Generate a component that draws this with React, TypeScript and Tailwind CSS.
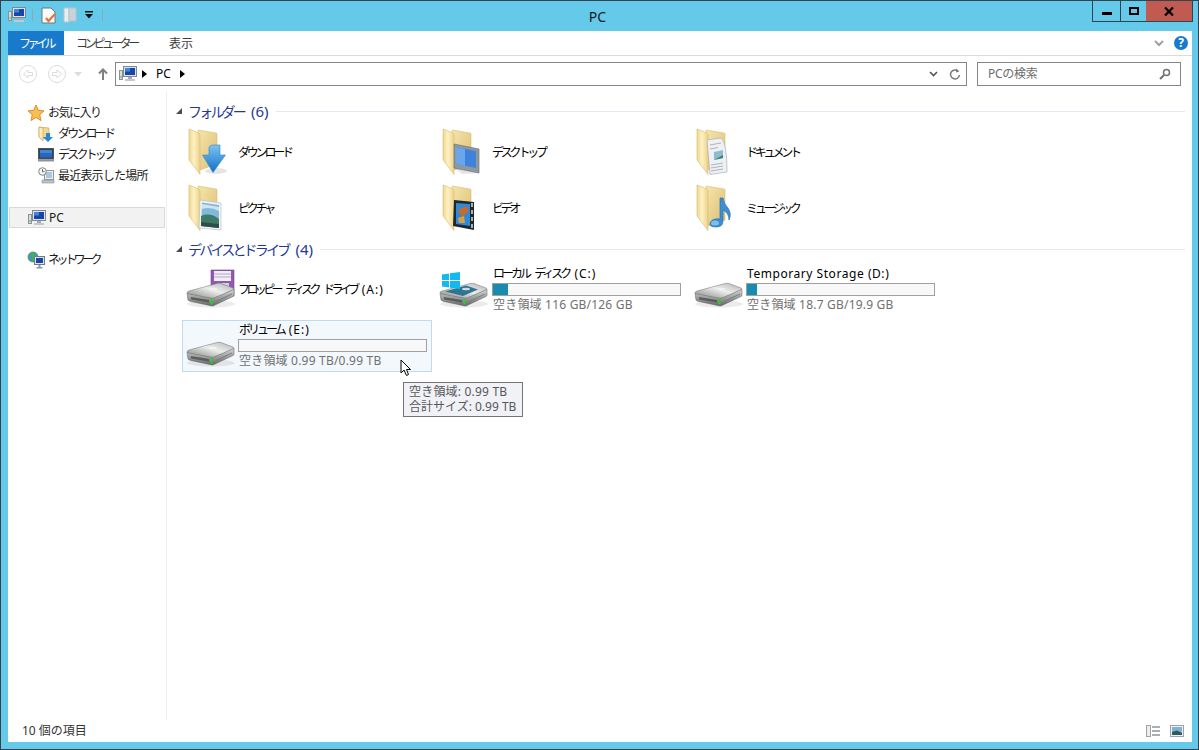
import React from "react";

const FONT = "[font-family:'Noto_Sans','Noto_Sans_CJK_JP',sans-serif]";

const PcIcon = ({ className = "" }: { className?: string }) => (
  <svg width="18" height="16" viewBox="0 0 18 16" className={className}>
    <rect x="0.5" y="4.5" width="3" height="9" fill="#d8dde0" stroke="#8a9298" />
    <rect x="1.5" y="10" width="1" height="2" fill="#45c040" />
    <rect x="4.5" y="0.5" width="13" height="10" fill="#dfe3e6" stroke="#7f8a92" />
    <rect x="6" y="2" width="10" height="7" fill="#1746a8" />
    <rect x="6" y="2" width="5" height="3.5" fill="#3f86e0" />
    <rect x="9" y="11" width="4" height="2" fill="#a6adb2" />
    <rect x="6" y="13" width="10" height="2" fill="#c4c9cc" />
  </svg>
);

const FolderIcon = ({ children }: { children?: React.ReactNode }) => (
  <svg width="48" height="48" viewBox="0 0 48 48" className="shrink-0">
    <defs>
      <linearGradient id="folderBack" x1="0" y1="0" x2="1" y2="1">
        <stop offset="0" stopColor="#f6e6ac" />
        <stop offset="1" stopColor="#dcbd72" />
      </linearGradient>
      <linearGradient id="folderLeaf" x1="0" y1="0" x2="1" y2="0">
        <stop offset="0" stopColor="#f0d68a" />
        <stop offset="0.45" stopColor="#fdf2c4" />
        <stop offset="1" stopColor="#ecd288" />
      </linearGradient>
    </defs>
    <path d="M10 3 L28 6 Q29 6 29 7 L29 37 L12 43 Z" fill="url(#folderBack)" stroke="#d9bc78" strokeWidth="0.6" />
    <path d="M1 2 L11 6 Q12 6.500 12 8 L12 47.500 L1.800 34 Q1 33 1 32 Z" fill="url(#folderLeaf)" stroke="#d8bb76" strokeWidth="0.6" />
    {children}
  </svg>
);

const DownloadArrow = () => (
  <>
    <defs>
      <linearGradient id="arrowBlue" x1="0" y1="0" x2="0" y2="1">
        <stop offset="0" stopColor="#7cc4f0" />
        <stop offset="1" stopColor="#1070c8" />
      </linearGradient>
    </defs>
    <ellipse cx="28" cy="44" rx="11" ry="3" fill="#000" opacity="0.1" />
    <path d="M21 20 Q22 18 25 18 L32 18 L32 28 L37.500 28 L25 45.500 L14.500 28 L21 28 Z" fill="url(#arrowBlue)" stroke="#2d86cc" strokeWidth="0.6" />
  </>
);

const DesktopOverlay = () => (
  <>
    <path d="M12 41 L37 46 L41 46 L20 47 Z" fill="#000" opacity="0.1" />
    <path d="M12 17 L37 22 L37 46 L12 41 Z" fill="#8f989d" stroke="#6e777c" strokeWidth="0.7" />
    <path d="M14 20 L34 24 L34 41 L14 37 Z" fill="#3f82dc" />
    <path d="M14 20 L23 22 L23 39 L14 37 Z" fill="#6aa6ec" />
  </>
);

const DocsOverlay = () => (
  <>
    <path d="M11 13 L25 11 Q31 15 31 45 L14 47.500 Z" fill="#eef0f4" stroke="#aab0b8" strokeWidth="0.7" />
    <path d="M14 18 L25 16 M14 22 L22 20.500 M15 38 L27 36 M15 41 L27 39 M15 44 L27 42" stroke="#b0b6bd" strokeWidth="1.2" />
    <path d="M18 25 L27 23 L27 31 L18 33 Z" fill="#8dbccf" />
    <path d="M20 32 L27 28 L27 31 L18 33 Z" fill="#3c7f6a" />
  </>
);

const PictureOverlay = () => (
  <>
    <path d="M12 17 L33 20 L33 47 L11 45 Z" fill="#f2f3f4" stroke="#b5b9bc" strokeWidth="0.6" />
    <path d="M14 19.500 L31 22 L31 45 L13 43 Z" fill="#7fb9dc" />
    <path d="M14 21 L31 24 L31 28 Q22 23 14 26 Z" fill="#cfe4ef" />
    <path d="M13 33 Q22 29 31 36 L31 45 L13 43 Z" fill="#3f7a68" />
    <path d="M13 39 L31 41 L31 45 L13 43 Z" fill="#2c4e4a" />
  </>
);

const VideoOverlay = () => (
  <>
    <path d="M12 17 L32 19 L32 47 L11 43 Z" fill="#20262b" />
    <path d="M14 20 L28 21 L28 43 L14 41 Z" fill="#2f8bd6" />
    <path d="M16 27 L24 23 L27 28 L20 34 Z" fill="#c96a28" />
    <path d="M16 35 L22 33 L23 40 L17 40 Z" fill="#d8a040" />
    <path d="M30 20 V24 M30 27 V31 M30 34 V38 M30 41 V45" stroke="#e8e8e8" strokeWidth="1.4" />
  </>
);

const MusicOverlay = () => (
  <>
    <path d="M24 15 L27 15 Q28 21 32 25 Q36 31 33 37 Q33 30 27 27 L27 38 Q27 44 20 44 Q13 44 14 40 Q16 35 24 36 Z" fill="#3c8fd4" stroke="#2a70b0" strokeWidth="0.7" />
    <ellipse cx="19" cy="40" rx="4" ry="2.500" fill="#7ec0ee" />
  </>
);

const DriveBody = ({ panel = false }: { panel?: boolean }) => (
  <>
    <defs>
      <linearGradient id="hddTop" x1="0" y1="1" x2="1" y2="0">
        <stop offset="0" stopColor="#80847f" />
        <stop offset="0.55" stopColor="#eceeec" />
        <stop offset="1" stopColor="#b0b4b2" />
      </linearGradient>
      <linearGradient id="hddFront" x1="0" y1="0" x2="0" y2="1">
        <stop offset="0" stopColor="#d8dad8" />
        <stop offset="1" stopColor="#646766" />
      </linearGradient>
    </defs>
    <ellipse cx="26" cy="41" rx="24" ry="3.500" fill="#000" opacity="0.08" />
    <path d="M2 30 L3 37 Q4 38 6 38.500 L27 43 Q28.500 43 30 42 L48 33.500 Q49 33 49 32 L49 26 L28 35 Z" fill="url(#hddFront)" stroke="#5c5f5e" strokeWidth="0.5" />
    <path d="M2 30 Q2 28.500 4 28 L32 20.500 Q34 20 36 20.500 L48 25 Q49.500 26 48 26.800 L30 34.500 Q28 35.500 26 35 L4 31 Q2.500 31 2 30 Z" fill="url(#hddTop)" stroke="#6d706f" strokeWidth="0.5" />
    {panel ? <path d="M7 28.500 L28 22.500 L40 26.500 L25 33 Z" fill="#2f7490" /> : null}
    <ellipse cx="28" cy="26" rx="4" ry="1.300" fill="#f4f4f4" opacity="0.8" />
    <path d="M6 34 L24 37 L24 39.500 L6 36.500 Z" fill="#4c504f" opacity="0.8" />
    <rect x="25.500" y="36.500" width="2" height="5" fill="#22d422" />
    <path d="M31 38.500 L47 31" stroke="#7b7e7d" strokeWidth="1" />
  </>
);

const HddIcon = ({ lift = 0 }: { lift?: number }) => (
  <svg width="52" height="48" viewBox="0 0 52 48" className="shrink-0">
    <g transform={`translate(0,${lift})`}>
      <DriveBody />
    </g>
  </svg>
);

const FloppyIcon = () => (
  <svg width="52" height="48" viewBox="0 0 52 48" className="shrink-0">
    <path d="M26 4 L49 4 L49 30 L26 30 Z" fill="#8e5bb0" stroke="#6e4290" strokeWidth="0.6" />
    <rect x="29" y="5" width="17" height="10" fill="#f2eef6" />
    <path d="M29 8 H46 M29 11 H46" stroke="#b9a6cb" strokeWidth="1" />
    <rect x="32" y="17" width="12" height="12" fill="#d6cfe0" />
    <rect x="35" y="19" width="3" height="7" fill="#7a4f9c" />
    <g transform="translate(0,-3)">
      <DriveBody />
    </g>
  </svg>
);

const WindowsDriveIcon = () => (
  <svg width="52" height="48" viewBox="0 0 52 48" className="shrink-0">
    <g transform="translate(-1,-3)">
      <DriveBody panel />
    </g>
    <g transform="translate(-3,2)">
      <path d="M6 6.500 L13 5.500 L13 12 L6 12 Z M14 5.300 L24 4 L24 12 L14 12 Z M6 13 L13 13 L13 19.500 L6 18.500 Z M14 13 L24 13 L24 21 L14 19.700 Z" fill="#13b8ee" />
    </g>
  </svg>
);

const StarIcon = () => (
  <svg width="18" height="18" viewBox="0 0 18 18">
    <path d="M9 1 L11.300 6.300 L17 6.900 L12.700 10.700 L14 16.500 L9 13.500 L4 16.500 L5.300 10.700 L1 6.900 L6.700 6.300 Z" fill="#f8c050" stroke="#e08a30" strokeWidth="1" />
  </svg>
);

const SmallDownloadIcon = () => (
  <svg width="16" height="16" viewBox="0 0 16 16">
    <path d="M1 1 L11 2 L11 12 L3 13 L1 11 Z" fill="#f0d88e" stroke="#caa860" strokeWidth="0.7" />
    <path d="M1 1 L5 2 L5 15 L1 11 Z" fill="#fbeebb" stroke="#caa860" strokeWidth="0.7" />
    <path d="M8 7 H12 V11 H15 L10 16 L5 11 H8 Z" fill="#2a88d8" />
  </svg>
);

const SmallDesktopIcon = () => (
  <svg width="17" height="14" viewBox="0 0 17 14">
    <rect x="0.500" y="0.500" width="15" height="10.500" fill="#36424c" stroke="#4a555e" />
    <rect x="2" y="2" width="12" height="7.500" fill="#2a66c0" />
    <rect x="2" y="2" width="12" height="3" fill="#3f86d8" />
    <rect x="0" y="11.500" width="16" height="2" fill="#8b959c" />
  </svg>
);

const RecentIcon = () => (
  <svg width="17" height="17" viewBox="0 0 17 17">
    <rect x="6.500" y="3.500" width="9" height="9" fill="#eef1f3" stroke="#8e979d" />
    <path d="M8 6 H14 M8 8 H14 M8 10 H14" stroke="#6d9ebc" strokeWidth="1" />
    <circle cx="4.500" cy="4.500" r="3.800" fill="#f4f5f5" stroke="#7d868b" />
    <path d="M4.500 2.200 V4.700 H6.500" stroke="#444" strokeWidth="0.8" fill="none" />
    <rect x="4" y="13" width="12" height="3" fill="#bcc2c6" stroke="#8e979d" strokeWidth="0.6" />
  </svg>
);

const NetworkIcon = () => (
  <svg width="18" height="18" viewBox="0 0 18 18">
    <circle cx="6" cy="6" r="5" fill="#4fb04f" stroke="#2d7c8c" strokeWidth="0.7" />
    <path d="M2 4 Q5 3 5 6 Q7 8 4 10 Z M7 1.500 Q10 3 10 5 L7 4 Z" fill="#3d8fd8" />
    <rect x="7.500" y="5.500" width="10" height="8" fill="#dfe3e6" stroke="#6f7a82" />
    <rect x="9" y="7" width="7" height="5" fill="#1746a8" />
    <rect x="11.500" y="14" width="2" height="2" fill="#8f989e" />
    <rect x="9.500" y="16" width="6" height="1.500" fill="#8f989e" />
  </svg>
);

const CircleNav = ({ back = false }: { back?: boolean }) => (
  <svg width="18" height="18" viewBox="0 0 18 18" fill="none" stroke="#dcdcdc">
    <circle cx="9" cy="9" r="8.500" />
    <path d={back ? "M13.500 7.500 H9 V5 L4.500 9 L9 13 V10.500 H13.500 Z" : "M4.500 7.500 H9 V5 L13.500 9 L9 13 V10.500 H4.500 Z"} />
  </svg>
);

const NavRow = ({ icon, label, selected = false, indent = false, spacing = "" }: { icon: React.ReactNode; label: string; indent?: boolean; selected?: boolean; spacing?: string }) => (
  <div className={`h-[21px] flex items-center text-[12px] text-[#1a1a1a] ${indent ? "pl-[29px]" : "pl-[19px]"} ${selected ? "bg-[#f2f2f2] border border-[#d9d9d9] ml-px mr-px !pl-[18px]" : ""}`}>
    <span className="flex items-center justify-center shrink-0 w-[18px] mr-[3px]">{icon}</span>
    <span className={`whitespace-nowrap ${spacing}`}>{label}</span>
  </div>
);

const GroupHeader = ({ kana, count }: { kana: string; count: string }) => (
  <div className="h-5 flex items-center pr-[7px]">
    <svg width="8" height="8" viewBox="0 0 8 8" className="ml-[8px] mr-[5px]">
      <path d="M7 1 V7 H1 Z" fill="#4d4d4d" />
    </svg>
    <span className="text-[14px] text-[#1e3a96] whitespace-nowrap tracking-[-2.800px]">{kana}</span>
    <span className="text-[15px] text-[#1e3a96] whitespace-nowrap ml-[7px]">{count}</span>
    <span className="flex-1 h-px bg-[#e2e9f0] ml-[7px]" />
  </div>
);

const FolderTile = ({ overlay, label }: { overlay: React.ReactNode; label: string }) => (
  <div className="h-[52px] w-[250px] flex items-center pl-[6px] pt-[2px]">
    <FolderIcon>{overlay}</FolderIcon>
    <span className="ml-[2px] pt-[4px] text-[12px] text-black whitespace-nowrap tracking-[-3.200px]">{label}</span>
  </div>
);

const Kana = ({ children, tight = false }: { children: React.ReactNode; tight?: boolean }) => (
  <span className={`mr-[2px] ${tight ? "tracking-[-3.600px]" : "tracking-[-3px]"}`}>{children}</span>
);

const Drive = ({ children }: { children: React.ReactNode }) => <span className="tracking-[1px]">{children}</span>;

const DriveTile = ({ icon, name, free, used, selected = false }: { icon: React.ReactNode; name: React.ReactNode; free?: string; used?: number; selected?: boolean }) => (
  <div className={`h-[52px] w-[250px] flex items-center pl-[2px] border ${selected ? "bg-[#f3f8fd] border-[#bcdcf4]" : "border-transparent"}`}>
    {icon}
    <div className={`ml-[1px] flex flex-col text-[12px] leading-[14px] ${free ? "mb-[2px]" : ""}`}>
      <span className={`whitespace-nowrap text-black ${free ? "pl-px" : ""}`}>{name}</span>
      {free ? (
        <>
          <div className="w-[189px] h-[13px] mt-[2px] border border-[#a0a0a0] bg-[#f8f8f8]">
            {used ? <div className="h-full bg-[#178bb0]" style={{ width: used }} /> : null}
          </div>
          <span className="pl-px mt-[2px] whitespace-nowrap text-[#707070] tracking-[0.200px]">{free}</span>
        </>
      ) : null}
    </div>
  </div>
);

export default function App() {
  return (
    <div className={`w-[1199px] h-[750px] relative flex flex-col overflow-hidden bg-[#65c9ea] border border-[#33434d] ${FONT}`}>
      {/* title bar */}
      <div className="h-[30px] shrink-0 flex items-start relative pl-[7px]">
        <div className="flex items-center h-[28px] gap-[6px]">
          <PcIcon />
          <span className="w-px h-[12px] bg-[#8fa9b3]" />
          <svg width="15" height="17" viewBox="0 0 15 17" className="ml-[2px]">
            <path d="M1 1 H10 L14 5 V16 H1 Z" fill="#fafafa" stroke="#6d777c" />
            <path d="M5 11 L7.500 14 L14 7" stroke="#e8733a" strokeWidth="2.200" fill="none" />
          </svg>
          <svg width="14" height="16" viewBox="0 0 14 16" className="ml-[1px]">
            <rect x="1" y="1" width="5" height="14" fill="#e9edf0" stroke="#b8c3c9" />
            <rect x="6" y="1" width="7" height="13" fill="#c6d3da" stroke="#b8c3c9" />
          </svg>
          <svg width="8" height="8" viewBox="0 0 8 8" className="ml-[2px]">
            <rect x="0" y="0" width="8" height="1.500" fill="#111" />
            <path d="M0 3 H8 L4 7.500 Z" fill="#111" />
          </svg>
          <span className="w-px h-[12px] bg-[#8fa9b3] ml-[3px]" />
        </div>
        <div className="flex-1 text-center text-[14px] leading-[32px] text-[#1a1a1a]">PC</div>
        <div className="flex h-[21px] border border-t-0 border-[#2e4450] mr-[5px]">
          <div className="w-[28px] flex items-center justify-center border-r border-[#2e4450]">
            <span className="w-[10px] h-[3px] bg-black mt-[5px]" />
          </div>
          <div className="w-[25px] flex items-center justify-center">
            <span className="w-[10px] h-[8px] border-2 border-black" />
          </div>
          <div className="w-[46px] flex items-center justify-center bg-[#c15b52]">
            <svg width="10" height="9" viewBox="0 0 10 9">
              <path d="M1 0.500 L9 8.500 M9 0.500 L1 8.500" stroke="#000" strokeWidth="2.200" />
            </svg>
          </div>
        </div>
      </div>

      {/* client area */}
      <div className="flex-1 min-h-0 ml-[7px] mr-[6px] mb-[7px] bg-white flex flex-col">
        {/* ribbon tabs */}
        <div className="h-[25px] shrink-0 flex items-stretch border-b border-[#dadbdc] text-[12px] pr-[3px]">
          <div className="w-[56px] h-[24px] bg-[#1979ca] text-white flex items-center justify-center pt-px tracking-[-3.500px]">ファイル</div>
          <span className="ml-[12px] pt-px flex items-center text-[#3c3c3c] tracking-[-3.300px] w-[93px] whitespace-nowrap">コンピューター</span>
          <span className="pt-px flex items-center text-[#3c3c3c]">表示</span>
          <div className="flex-1" />
          <div className="flex items-center gap-[10px] pr-[1px]">
            <svg width="10" height="7" viewBox="0 0 10 7" fill="none" stroke="#a0a0a0" strokeWidth="2">
              <path d="M1 1 L5 5 L9 1" />
            </svg>
            <span className="w-[14px] h-[14px] rounded-full bg-[#1979ca] text-white text-[12px] font-bold leading-[14px] text-center">?</span>
          </div>
        </div>

        {/* address row */}
        <div className="h-[36px] shrink-0 flex items-start pt-[6px] pl-[11px]">
          <div className="flex items-center h-[24px]">
            <CircleNav back />
            <span className="w-[11px]" />
            <CircleNav />
            <svg width="8" height="5" viewBox="0 0 8 5" className="ml-[8px]">
              <path d="M0 0 H8 L4 4.500 Z" fill="#dcdcdc" />
            </svg>
            <svg width="10" height="12" viewBox="0 0 10 12" className="ml-[16px]" fill="none" stroke="#7f7f7f" strokeWidth="2">
              <path d="M5 12 V2 M1 5.500 L5 1.500 L9 5.500" />
            </svg>
          </div>
          <div className="ml-[7px] w-[852px] h-[24px] border border-[#868686] flex items-center pl-[3px] pr-[5px] text-[12px] text-black">
            <PcIcon />
            <svg width="5" height="8" viewBox="0 0 5 8" className="ml-[5px]">
              <path d="M0 0 L5 4 L0 8 Z" fill="#000" />
            </svg>
            <span className="ml-[9px]">PC</span>
            <svg width="5" height="8" viewBox="0 0 5 8" className="ml-[9px]">
              <path d="M0 0 L5 4 L0 8 Z" fill="#000" />
            </svg>
            <div className="flex-1" />
            <svg width="9" height="6" viewBox="0 0 9 6" fill="none" stroke="#555" strokeWidth="1.600">
              <path d="M1 1 L4.500 4.500 L8 1" />
            </svg>
            <svg width="12" height="12" viewBox="0 0 12 12" className="ml-[11px]" fill="none" stroke="#7a7a7a" strokeWidth="1.500">
              <path d="M9.500 3.500 A4.500 4.500 0 1 0 10.500 7" />
              <path d="M7 0.500 L10 3.500 L7 4.500" fill="#7a7a7a" stroke="none" />
            </svg>
          </div>
          <div className="ml-[10px] w-[204px] h-[24px] border border-[#868686] flex items-center pl-[10px] pr-[9px] text-[12px] text-[#6d6d6d]">
            <span className="flex-1 tracking-[-0.300px]">PCの検索</span>
            <svg width="12" height="12" viewBox="0 0 12 12" fill="none" stroke="#707070">
              <circle cx="7.500" cy="4.500" r="3" strokeWidth="1.500" />
              <path d="M5 7 L1 11" strokeWidth="2" />
            </svg>
          </div>
        </div>

        {/* body */}
        <div className="flex-1 min-h-0 flex">
          <nav className="w-[159px] shrink-0 h-[628px] border-r border-[#eeeeee] pt-[10px] flex flex-col">
            <NavRow icon={<StarIcon />} label="お気に入り" spacing="tracking-[-1.500px]" />
            <NavRow indent icon={<SmallDownloadIcon />} label="ダウンロード" spacing="tracking-[-2.800px]" />
            <NavRow indent icon={<SmallDesktopIcon />} label="デスクトップ" spacing="tracking-[-2.800px]" />
            <NavRow indent icon={<RecentIcon />} label="最近表示した場所" spacing="tracking-[-0.800px]" />
            <div className="h-[21px]" />
            <NavRow selected icon={<PcIcon />} label="PC" />
            <div className="h-[21px]" />
            <NavRow icon={<NetworkIcon />} label="ネットワーク" spacing="tracking-[-3.500px]" />
          </nav>

          <main className="flex-1 min-w-0 pt-[9px] flex flex-col">
            <GroupHeader kana="フォルダー" count="(6)" />
            <div className="mt-[3px] pl-[15px] grid grid-cols-[254px_254px_254px] gap-y-[4px]">
              <FolderTile overlay={<DownloadArrow />} label="ダウンロード" />
              <FolderTile overlay={<DesktopOverlay />} label="デスクトップ" />
              <FolderTile overlay={<DocsOverlay />} label="ドキュメント" />
              <FolderTile overlay={<PictureOverlay />} label="ピクチャ" />
              <FolderTile overlay={<VideoOverlay />} label="ビデオ" />
              <FolderTile overlay={<MusicOverlay />} label="ミュージック" />
            </div>
            <div className="mt-[7px]">
              <GroupHeader kana="デバイスとドライブ" count="(4)" />
            </div>
            <div className="mt-[5px] pl-[15px] grid grid-cols-[254px_254px_254px] gap-y-[4px]">
              <DriveTile icon={<FloppyIcon />} name={<><Kana tight>フロッピー</Kana> <Kana tight>ディスク</Kana> <Kana tight>ドライブ</Kana> <Drive>(A:)</Drive></>} />
              <DriveTile icon={<WindowsDriveIcon />} name={<><Kana>ローカル</Kana> <Kana>ディスク</Kana> <Drive>(C:)</Drive></>} free="空き領域 116 GB/126 GB" used={15} />
              <DriveTile icon={<HddIcon lift={-3} />} name={<span className="tracking-[0.550px]">Temporary Storage (D:)</span>} free="空き領域 18.7 GB/19.9 GB" used={10} />
              <DriveTile selected icon={<HddIcon />} name={<><Kana>ボリューム</Kana> <Drive>(E:)</Drive></>} free="空き領域 0.99 TB/0.99 TB" />
            </div>
          </main>
        </div>

        {/* status bar */}
        <div className="h-[22px] shrink-0 flex items-center pl-[14px] pr-[8px] text-[12px] text-[#333333]">
          <span className="flex-1">10 個の項目</span>
          <svg width="15" height="12" viewBox="0 0 15 12" fill="none" className="mr-[9px]">
            <rect x="0.500" y="0.500" width="4" height="11" fill="#f3efe8" stroke="#9aa3aa" />
            <path d="M6 2 H14 M6 6 H14 M6 10 H14" stroke="#56606a" strokeWidth="1.200" />
          </svg>
          <svg width="14" height="12" viewBox="0 0 14 12">
            <rect x="0.500" y="0.500" width="13" height="11" fill="#eef2f6" stroke="#9aa3b2" />
            <rect x="2" y="2" width="10" height="8" fill="#7fb2d4" />
            <path d="M2 7 L7 5.500 L12 8 V10 H2 Z" fill="#2f5a55" />
          </svg>
        </div>
      </div>

      {/* pointer and tooltip over the hovered tile */}
      <svg width="13" height="18" viewBox="0 0 13 18" className="absolute left-[399px] top-[358px]">
        <path d="M1 1 V14 L4 11 L6.500 16.500 L8.500 15.500 L6.500 10.500 L10.500 10.500 Z" fill="#fff" stroke="#000" strokeWidth="1" />
      </svg>
      <div className="absolute left-[402px] top-[381px] w-[120px] h-[35px] bg-[#f1f2f7] border border-[#767676] pl-[5px] pt-[1px] text-[12px] leading-[15px] text-[#575757] whitespace-nowrap">
        <div className="tracking-[0.200px]">空き領域: 0.99 TB</div>
        <div>合計サイズ: 0.99 TB</div>
      </div>
    </div>
  );
}
